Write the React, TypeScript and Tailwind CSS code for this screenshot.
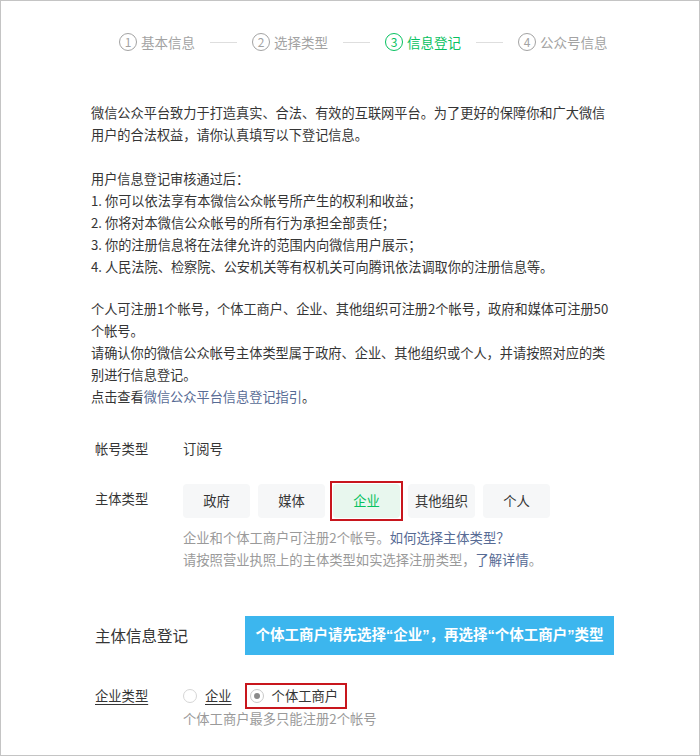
const steps = [
  { n: "1", label: "基本信息", active: false },
  { n: "2", label: "选择类型", active: false },
  { n: "3", label: "信息登记", active: true },
  { n: "4", label: "公众号信息", active: false },
];

const subjects = ["政府", "媒体", "企业", "其他组织", "个人"];

function StepBar() {
  return (
    <div className="flex items-center h-[18px] mt-[32px] pl-[118px]">
      {steps.map((s, i) => (
        <div key={s.n} className="flex items-center">
          {i > 0 && <span className="w-[27px] h-px bg-[#dedede] mx-[15px]" />}
          <div className={`flex items-center ${s.active ? "text-[#07c160]" : "text-[#a3a3a3]"}`}>
            <span className="w-[18px] h-[18px] rounded-full border border-current flex items-center justify-center text-[12px] leading-none">
              {s.n}
            </span>
            <span className="ml-[4px] text-[13.5px] leading-[18px]">{s.label}</span>
          </div>
        </div>
      ))}
    </div>
  );
}

export default function App() {
  return (
    <div className="w-[700px] h-[756px] border border-[#c4c4c4] bg-white overflow-hidden text-[#353535] font-['Noto_Sans_CJK_SC',sans-serif]">
      <StepBar />

      <div className="pl-[90px] mt-[51px]">
        <div className="w-[527px] text-[13.2px] leading-[22px]">
          <p>微信公众平台致力于打造真实、合法、有效的互联网平台。为了更好的保障你和广大微信用户的合法权益，请你认真填写以下登记信息。</p>
          <p className="mt-[22px]">
            用户信息登记审核通过后：
            <br />1. 你可以依法享有本微信公众帐号所产生的权利和收益；
            <br />2. 你将对本微信公众帐号的所有行为承担全部责任；
            <br />3. 你的注册信息将在法律允许的范围内向微信用户展示；
            <br />4. 人民法院、检察院、公安机关等有权机关可向腾讯依法调取你的注册信息等。
          </p>
          <p className="mt-[20px]">
            个人可注册1个帐号，个体工商户、企业、其他组织可注册2个帐号，政府和媒体可注册50个帐号。
            <br />请确认你的微信公众帐号主体类型属于政府、企业、其他组织或个人，并请按照对应的类别进行信息登记。
            <br />点击查看<a className="text-[#576b95]">微信公众平台信息登记指引</a>。
          </p>
        </div>
      </div>

      <div className="pl-[94px] text-[13.3px]">
        <div className="flex mt-[30px] leading-[22px]">
          <div className="w-[88px]">帐号类型</div>
          <div>订阅号</div>
        </div>

        <div className="flex mt-[24px]">
          <div className="w-[88px] pt-[4px] leading-[22px]">主体类型</div>
          <div>
            <div className="flex gap-[8px]">
              {subjects.map((s) =>
                s === "企业" ? (
                  <div key={s} className="-m-[3px] p-px border-2 border-[#c8161d]">
                    <div className="w-[67px] h-[34px] rounded-[4px] flex items-center justify-center bg-[#e8f7ee] text-[#07c160]">
                      {s}
                    </div>
                  </div>
                ) : (
                  <div
                    key={s}
                    className="w-[67px] h-[34px] rounded-[4px] flex items-center justify-center bg-[#f6f7f8]"
                  >
                    {s}
                  </div>
                )
              )}
            </div>
            <div className="mt-[9px] leading-[22px] text-[#9a9a9a]">
              <p>
                企业和个体工商户可注册2个帐号。<a className="text-[#576b95]">如何选择主体类型？</a>
              </p>
              <p>
                请按照营业执照上的主体类型如实选择注册类型，<a className="text-[#576b95]">了解详情</a>。
              </p>
            </div>
          </div>
        </div>

        <div className="flex items-center mt-[45px]">
          <div className="w-[150px] text-[15.5px]">主体信息登记</div>
          <div className="w-[369px] h-[39px] bg-[#3cb6ee] text-white font-bold text-[14.5px] flex items-center justify-center whitespace-nowrap font-['Liberation_Sans','Noto_Sans_CJK_SC',sans-serif]">
            个体工商户请先选择“企业”，再选择“个体工商户”类型
          </div>
        </div>

        <div className="flex items-center mt-[28px] h-[26px]">
          <div className="w-[88px] underline underline-offset-[3px]">企业类型</div>
          <label className="flex items-center">
            <span className="w-[14px] h-[14px] rounded-full border border-[#d6d6d6]" />
            <span className="ml-[8px] underline underline-offset-[3px]">企业</span>
          </label>
          <label className="ml-[13px] h-[26px] border-2 border-[#c8161d] flex items-center pl-[3px] pr-[7px]">
            <span className="w-[14px] h-[14px] rounded-full border border-[#c9c9c9] flex items-center justify-center">
              <span className="w-[6px] h-[6px] rounded-full bg-[#8a8a8a]" />
            </span>
            <span className="ml-[8px]">个体工商户</span>
          </label>
        </div>
        <div className="pl-[88px] leading-[20px] text-[#9a9a9a]">个体工商户最多只能注册2个帐号</div>
      </div>
    </div>
  );
}
